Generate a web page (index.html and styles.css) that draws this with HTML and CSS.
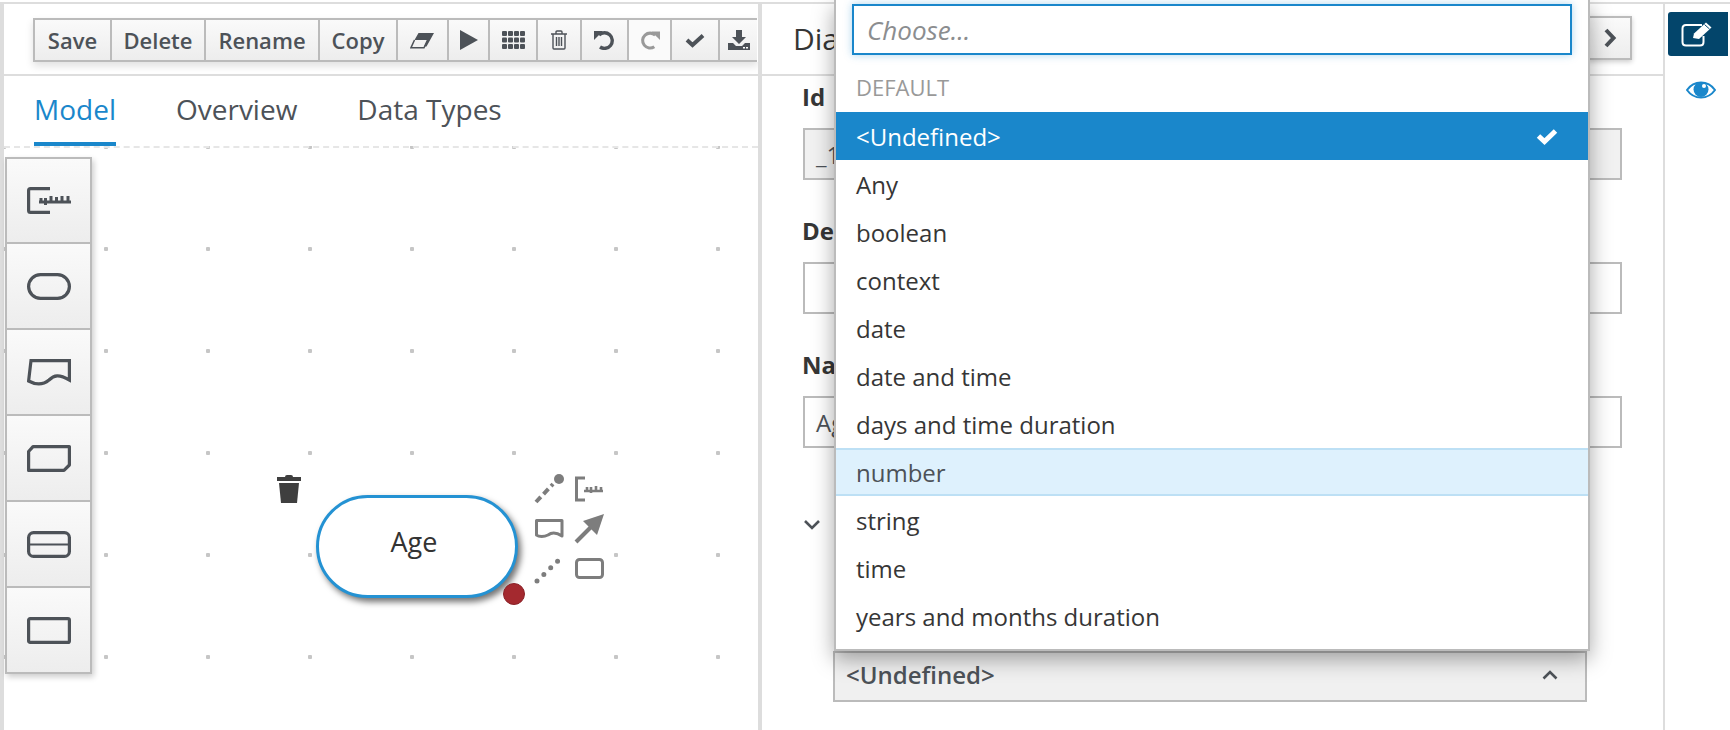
FILE: index.html
```html
<!DOCTYPE html>
<html lang="en">
<head>
    <meta charset="UTF-8">
    <title>Decision Model</title>
    <link rel="stylesheet" href="styles.css">
</head>
<body>
<div class="page">
    <div class="editor">
        <div class="toolbar-bar">
            <div class="toolbar">
                <button class="btn b-save">Save</button>
                <button class="btn b-delete">Delete</button>
                <button class="btn b-rename">Rename</button>
                <button class="btn b-copy">Copy</button>
                <button class="btn b-eraser"><svg width="25" height="17" viewBox="0 0 25 17"><path d="M8.5 1 H24 L16.5 14.5 H14 L17.5 8 H4.5 Z" fill="#4d5258"/><path d="M4.5 8 L1 15.7 H14 L17.5 8" fill="none" stroke="#4d5258" stroke-width="1.5"/></svg></button>
                <button class="btn b-play"><svg width="18" height="20" viewBox="0 0 18 20"><path d="M0 0 L18 10 L0 20 Z" fill="#4d5258"/></svg></button>
                <button class="btn b-grid"><svg width="23" height="18" viewBox="0 0 23 18" fill="#4d5258"><rect width="5" height="5" rx="1"/><rect x="6" width="5" height="5" rx="1"/><rect x="12" width="5" height="5" rx="1"/><rect x="18" width="5" height="5" rx="1"/><rect y="6.5" width="5" height="5" rx="1"/><rect x="6" y="6.5" width="5" height="5" rx="1"/><rect x="12" y="6.5" width="5" height="5" rx="1"/><rect x="18" y="6.5" width="5" height="5" rx="1"/><rect y="13" width="5" height="5" rx="1"/><rect x="6" y="13" width="5" height="5" rx="1"/><rect x="12" y="13" width="5" height="5" rx="1"/><rect x="18" y="13" width="5" height="5" rx="1"/></svg></button>
                <button class="btn b-trash"><svg width="18" height="20" viewBox="0 0 18 20" fill="none" stroke="#4d5258" stroke-width="1.4"><path d="M1 4 H17 M6 4 V2 Q6 1 7 1 H11 Q12 1 12 2 V4 M3 4 V18 Q3 19 4 19 H14 Q15 19 15 18 V4 M6.5 7 V16 M9 7 V16 M11.5 7 V16"/></svg></button>
                <button class="btn b-undo"><svg width="21" height="20" viewBox="0 0 21 20" fill="none"><path d="M5 5 A7.8 7.8 0 1 1 6 17" stroke="#4d5258" stroke-width="3.4"/><path d="M0 1 L9 1 L0 10 Z" fill="#4d5258"/></svg></button>
                <button class="btn b-redo"><svg width="20" height="20" viewBox="0 0 21 20" fill="none"><path d="M16 5 A7.8 7.8 0 1 0 15 17" stroke="#999" stroke-width="3.2"/><path d="M21 1 L12 1 L21 10 Z" fill="#999"/></svg></button>
                <button class="btn b-check"><svg width="20" height="15" viewBox="0 0 20 15"><path d="M2 7 L7.5 12 L18 2.5" fill="none" stroke="#4d5258" stroke-width="4"/></svg></button>
                <button class="btn b-download"><svg width="22" height="20" viewBox="0 0 22 20" fill="#4d5258"><path d="M8 0 H14 V7 H18 L11 14 L4 7 H8 Z"/><path d="M0 13 H5 L8 16 H14 L17 13 H22 V20 H0 Z"/><rect x="15" y="17" width="2" height="1.5" fill="#fff"/><rect x="18" y="17" width="2" height="1.5" fill="#fff"/></svg></button>
            </div>
        </div>
        <ul class="tabs">
            <li class="on">Model</li>
            <li>Overview</li>
            <li>Data Types</li>
        </ul>
        <div class="canvas">
            <ul class="palette">
                <li><svg width="44" height="27" viewBox="0 0 44 27" fill="none" stroke="#4d5258" stroke-width="3.2"><path d="M23 1.6 H3.5 Q1.6 1.6 1.6 3.5 V23.5 Q1.6 25.4 3.5 25.4 H23"/><path d="M12 15 H44" stroke-width="3"/><path d="M14 15 V11 M18.5 18 V11 M24 15 V9 M29.5 15 V10 M35 15 V9 M41 15 V9" stroke-width="3"/></svg></li>
                <li><svg width="44" height="27" viewBox="0 0 44 27" fill="none" stroke="#4d5258" stroke-width="3.2"><rect x="1.6" y="1.6" width="40.8" height="23.8" rx="11.9"/></svg></li>
                <li><svg width="44" height="27" viewBox="0 0 44 27" fill="none" stroke="#4d5258" stroke-width="3.2"><path d="M4 1.6 H42.4 V21 C32 15 27 16 22 21 C16 26 9 26 1.6 22 L4 1.6 Z"/></svg></li>
                <li><svg width="44" height="27" viewBox="0 0 44 27" fill="none" stroke="#4d5258" stroke-width="3.2"><path d="M6 1.6 H42.4 V20 L37 25.4 H1.6 V6.5 Z" stroke-linejoin="round"/></svg></li>
                <li><svg width="44" height="27" viewBox="0 0 44 27" fill="none" stroke="#4d5258" stroke-width="3.2"><rect x="1.6" y="1.6" width="40.8" height="23.8" rx="5"/><path d="M2 13.5 H42" stroke-width="2"/></svg></li>
                <li><svg width="44" height="27" viewBox="0 0 44 27" fill="none" stroke="#4d5258" stroke-width="3.2"><rect x="1.6" y="1.6" width="40.8" height="23.8" rx="1.5"/></svg></li>
            </ul>

            <svg class="node-trash" width="26" height="30" viewBox="0 0 26 30" fill="#3f3f3f"><path d="M9 3 Q9 1 11 1 H15 Q17 1 17 3 H25 V7 H1 V3 Z"/><path d="M3 9 H23 L21 29 H5 Z"/></svg>
            <div class="node">Age</div>
            <div class="node-dot"></div>
            <svg class="node-tools" width="74" height="115" viewBox="0 0 74 115" fill="none" stroke="#7d7d7d" stroke-width="3">
                <path d="M2 30 L19 12" stroke-dasharray="7 4" stroke-width="4"/><circle cx="25" cy="7" r="5" fill="#7d7d7d" stroke="none"/>
                <path d="M51 6 H42.5 V28 H51"/><path d="M50 19 H69 M53 19 V15 M57 21 V15 M62 19 V14 M67 19 V15" stroke-width="2.6"/>
                <path d="M2.5 48.5 H28 V64 C22 60 18 60 14 63 C10 65 5 65 2.5 63 Z" stroke-linejoin="round"/>
                <path d="M42 70 L62 50" stroke-width="4"/><path d="M70 42 L49 49 L63 63 Z" fill="#7d7d7d" stroke="none"/>
                <path d="M3 109 L28 85" stroke-dasharray="0 9.5" stroke-linecap="round" stroke-width="5"/>
                <rect x="42.5" y="87.5" width="26" height="18" rx="3"/>
            </svg>
        </div>
    </div>

    <div class="panel">
        <div class="panel-head">
            <h3>Diagram Properties</h3>
            <button class="btn b-next"><svg width="14" height="20" viewBox="0 0 14 20"><path d="M3 2 L10.5 10 L3 18" fill="none" stroke="#4d5258" stroke-width="4"/></svg></button>
        </div>
        <form class="props">
            <div class="field">
                <label>Id</label>
                <div class="input readonly">_1</div>
            </div>
            <div class="field">
                <label>Description</label>
                <div class="input"></div>
            </div>
            <div class="field">
                <label>Name</label>
                <div class="input">Age</div>
            </div>
            <svg class="toggle" width="18" height="12" viewBox="0 0 18 12"><path d="M2 2 L9 9 L16 2" fill="none" stroke="#4d5258" stroke-width="2.6"/></svg>
            <div class="select">
                <span>&lt;Undefined&gt;</span>
                <svg width="16" height="10" viewBox="0 0 16 10"><path d="M1.5 8.5 L8 2 L14.5 8.5" fill="none" stroke="#4d5258" stroke-width="2.6"/></svg>
            </div>
        </form>
    </div>

    <div class="side">
        <div class="side-on"><svg width="32" height="26" viewBox="0 0 32 26" fill="none" stroke="#fff" stroke-width="2"><path d="M21 4 H5 Q1.5 4 1.5 7.5 V21 Q1.5 24.5 5 24.5 H19 Q22.5 24.5 22.5 21 V15"/><path d="M12 17 L13 12.5 L25 1.5 L30.5 6.5 L18 18 Z" fill="#fff" stroke="none"/><path d="M23.5 3.5 L28.5 8" stroke="#03456b" stroke-width="1"/></svg></div>
        <svg class="eye" width="30" height="20" viewBox="0 0 30 20"><path d="M1 10 C8 0 22 0 29 10 C22 20 8 20 1 10 Z" fill="none" stroke="#1a87cb" stroke-width="2"/><circle cx="15" cy="9.5" r="7.5" fill="#1a87cb"/><circle cx="18" cy="6" r="2" fill="#fff"/></svg>
    </div>

    <div class="dropdown">
        <div class="search">Choose...</div>
        <div class="group">DEFAULT</div>
        <ul class="options">
            <li class="selected">&lt;Undefined&gt;<svg width="22" height="17" viewBox="0 0 22 17"><path d="M2.5 8 L8.5 13.5 L19.5 3" fill="none" stroke="#fff" stroke-width="5"/></svg></li>
            <li>Any</li>
            <li>boolean</li>
            <li>context</li>
            <li>date</li>
            <li>date and time</li>
            <li>days and time duration</li>
            <li class="hover">number</li>
            <li>string</li>
            <li>time</li>
            <li>years and months duration</li>
        </ul>
    </div>
</div>
</body>
</html>
```

FILE: styles.css
```css
* { margin:0; padding:0; box-sizing:border-box; }
ul,li { list-style:none; }
html,body { height:100%; overflow:hidden; background:#fff; }
body { font-family:"Open Sans", "Liberation Sans", sans-serif; color:#363636; }

.page { position:relative; display:flex; height:730px; width:1730px; padding-top:2px; }
.page::before { content:""; position:absolute; left:0; right:0; top:2px; height:2px; background:#ddd; }

/* left: toolbar, tabs, canvas */
.editor { width:762px; padding-top:2px; border-left:4px solid #ddd; border-right:4px solid #ddd; display:flex; flex-direction:column; }
.toolbar-bar { height:72px; border-bottom:2px solid #ddd; padding:14px 0 0 29px; overflow:hidden; }
.toolbar { display:flex; height:44px; box-shadow:0 4px 8px rgba(0,0,0,.12); }

.btn { height:44px; border:2px solid #bbb; border-right-width:0; background:linear-gradient(#fafafa,#ededed); color:#4d5258; font:600 22px "Open Sans", sans-serif; display:flex; align-items:center; justify-content:center; }
.b-save { width:77px; }
.b-delete { width:94px; }
.b-rename { width:114px; }
.b-copy { width:78px; }
.b-eraser { width:51px; }
.b-play { width:41px; }
.b-grid { width:48px; }
.b-trash { width:44px; }
.b-undo { width:47px; }
.b-redo { width:43px; background:#fafafa; border-color:#ddd; border-left-color:#bbb; border-bottom-color:#bbb; border-top-color:#bbb; }
.b-check { width:48px; }
.b-download { width:39px; border-right:0; }

.tabs { display:flex; height:70px; padding-left:30px; gap:60px; font-size:28px; color:#4d5258; }
.tabs li { height:70px; padding-top:9px; line-height:48px; }
.tabs li.on { color:#1a87cb; border-bottom:4px solid #1a87cb; }

/* dotted canvas */
.canvas { position:relative; flex:1; border-top:2px dashed #e6e6e6; background-image:radial-gradient(circle, #c6c6c6 2px, transparent 2.5px); background-size:102px 102px; background-position:51px 50px; }

.palette { position:absolute; left:1px; top:9px; width:87px; box-shadow:2px 3px 6px rgba(0,0,0,.2); }
.palette li { height:86px; border:2px solid #bbb; border-top-width:0; background:linear-gradient(#fafafa,#ededed); display:flex; align-items:center; justify-content:center; }
.palette li:first-child { height:87px; border-top-width:2px; }

.node { position:absolute; left:312px; top:347px; width:202px; height:103px; border:3px solid #2492d3; border-radius:52px; background:#fff; box-shadow:3px 4px 6px rgba(0,0,0,.55); display:flex; align-items:center; justify-content:center; padding:0 6px 10px 0; font-size:27px; color:#333; }
.node-dot { position:absolute; left:499px; top:435px; width:22px; height:22px; border-radius:50%; background:#a4292f; border:1px solid #8a2228; }
.node-trash { position:absolute; left:272px; top:326px; }
.node-tools { position:absolute; left:530px; top:324px; }

/* right panel */
.panel { position:relative; width:901px; padding-top:2px; }
.panel-head { height:72px; border-bottom:2px solid #ddd; display:flex; justify-content:space-between; padding:12px 31px 0 31px; }
.panel-head h3 { font-size:30px; font-weight:400; line-height:46px; }
.b-next { width:44px; border-right-width:2px; box-shadow:0 2px 5px rgba(0,0,0,.2); }

.props { padding:6px 41px 0; }
.field { margin-bottom:36px; }
.field label { display:block; height:30px; line-height:30px; margin-bottom:16px; margin-left:-1px; font-size:24px; font-weight:700; color:#363636; }
.input { height:52px; border:2px solid #bbb; padding:0 11px; font-size:24px; line-height:50px; color:#4d5258; }
.input.readonly { background:#f1f1f1; }

.toggle { display:block; margin:71px 0 0 0; }
.select { width:754px; height:51px; margin:120px 0 0 30px; border:2px solid #bbb; background:#f0f0f0; display:flex; align-items:center; justify-content:space-between; padding:0 27px 4px 11px; font-size:24px; font-weight:600; color:#4d5258; }

/* far right tabs */
.side { width:65px; border-left:2px solid #ddd; padding:10px 0 0 3px; display:flex; flex-direction:column; }
.side-on { height:44px; background:#03456b; border-radius:3px 0 0 3px; display:flex; align-items:center; justify-content:center; padding-right:2px; }
.eye { margin:24px 0 0 18px; }

/* open dropdown */
.dropdown { position:absolute; left:834px; top:0; width:756px; height:651px; background:#fff; border:2px solid #bbb; border-top:0; box-shadow:0 8px 20px rgba(0,0,0,.35); padding-top:4px; }
.search { margin-left:16px; width:720px; height:51px; border:2px solid #1a87cb; box-shadow:0 0 8px rgba(26,135,203,.35); padding-left:13px; font-size:26px; font-style:italic; line-height:49px; color:#8b8d8f; }
.group { height:57px; line-height:64px; padding-left:20px; font-size:22px; color:#999; }
.options li { height:48px; padding:1px 30px 0 20px; font-size:24px; display:flex; align-items:center; justify-content:space-between; color:#363636; }
.options li.selected { background:#1a87cb; color:#fff; }
.options li.hover { background:#def1fd; border-top:2px solid #bde0f5; border-bottom:2px solid #bde0f5; color:#4d5258; }
```
